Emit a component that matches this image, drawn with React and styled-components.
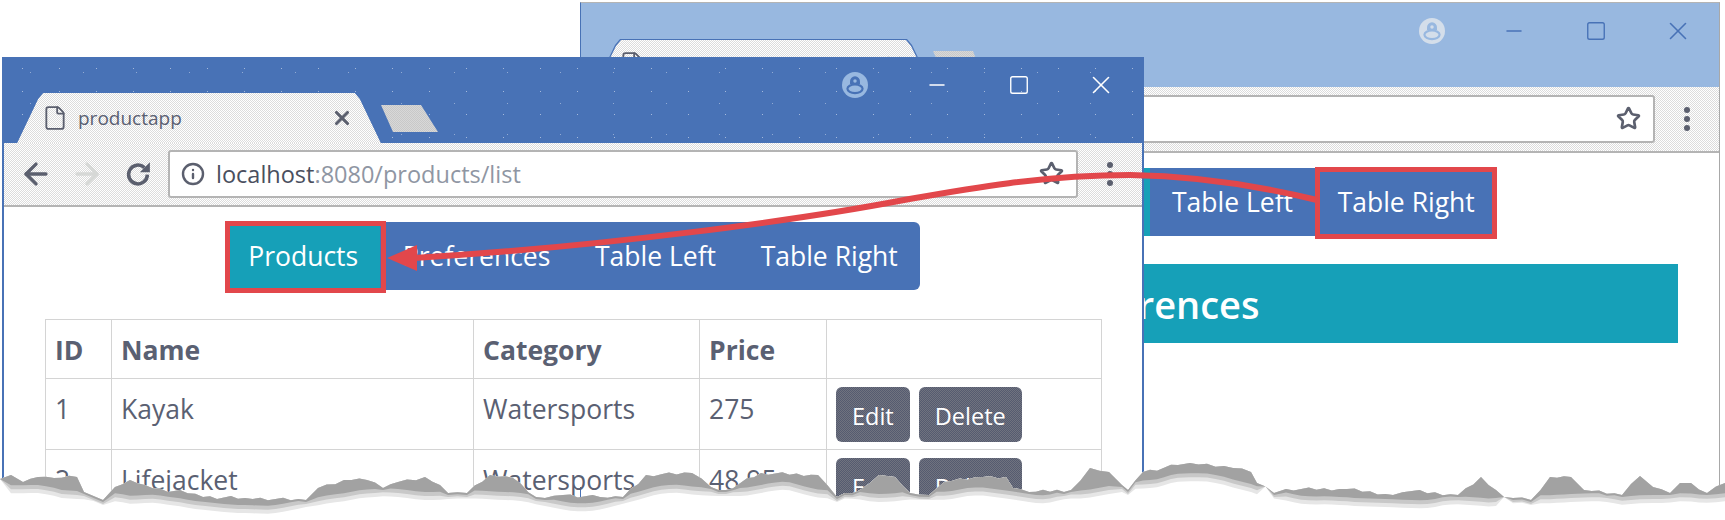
import React from 'react'
import styled, { createGlobalStyle } from 'styled-components'
import { ArrowLeft, ArrowRight, File, Info, Minus, Square, Star, X } from 'lucide-react'

const BLUE = '#4872b6'
const PALE = '#98b8e0'
const TEAL = '#16a0b8'
const RED = '#e2474b'
const INK = '#5a6072'

const dither = (a, b) => `repeating-conic-gradient(${a} 0 25%, ${b} 0 50%) 0 0 / 2px 2px`

const navItems = ['Products', 'Preferences', 'Table Left', 'Table Right']

const products = [
    { id: 1, name: 'Kayak', category: 'Watersports', price: '275' },
    { id: 2, name: 'Lifejacket', category: 'Watersports', price: '48.95' },
]

// top of the torn paper edge, left to right
const tear = [
    [0, 479], [11, 475], [23, 482], [38, 477], [54, 478], [77, 477], [84, 492], [103, 500], [115, 487],
    [130, 480], [145, 485], [168, 492], [180, 490], [203, 497], [245, 498], [306, 500], [318, 488],
    [344, 480], [367, 480], [383, 488], [398, 482], [425, 477], [440, 485], [448, 493], [467, 493],
    [490, 475], [513, 478], [536, 497], [563, 495], [600, 497], [623, 497], [646, 475], [692, 473],
    [711, 487], [726, 490], [761, 473], [818, 475], [837, 497], [860, 490], [879, 475], [895, 477],
    [910, 493], [929, 495], [944, 482], [983, 477], [1006, 477], [1013, 488], [1029, 492], [1071, 490],
    [1090, 468], [1109, 472], [1122, 485], [1128, 490], [1143, 472], [1178, 465], [1190, 463], [1224, 466],
    [1251, 472], [1257, 483], [1274, 493], [1286, 489], [1347, 489], [1393, 495], [1412, 491], [1458, 495],
    [1481, 477], [1496, 490], [1504, 497], [1531, 500], [1550, 477], [1571, 477], [1584, 490], [1622, 495],
    [1640, 476], [1653, 487], [1670, 493], [1680, 483], [1691, 483], [1707, 493], [1725, 483],
]

// the paper has small breaks where no shadow shows
const inGap = (x) => x < 11 || (x > 1257 && x < 1272) || (x > 1498 && x < 1506)

const tearPoints = () => {
    const pts = []
    tear.forEach(([x, y], i) => {
        const next = tear[i + 1]
        pts.push({ x, y, base: y })
        if (!next) return
        const steps = Math.floor((next[0] - x) / 7)
        for (let s = 1; s < steps; s++) {
            const t = s / steps
            const jag = ((x + s * 13) % 5) - 2
            pts.push({ x: x + (next[0] - x) * t, y: y + (next[1] - y) * t + jag * 0.8, base: y + (next[1] - y) * t })
        }
    })
    return pts.map((p, i) => {
        const near = pts.slice(Math.max(0, i - 5), i + 6)
        return { ...p, soft: near.reduce((sum, n) => sum + n.base, 0) / near.length }
    })
}

const TornEdge = () => {
    const pts = tearPoints()
    const top = pts.map((p) => `${p.x},${p.y}`).join(' ')
    const lower = (offset, min) =>
        [...pts].reverse().map((p) => `${p.x},${inGap(p.x) ? p.y : Math.max(p.soft + offset, p.y + min)}`).join(' ')
    return (
        <Overlay viewBox="0 0 1725 520">
            <polygon points={`${top} 1725,520 0,520`} fill="#fff" />
            <polygon points={`${top} ${lower(15, 5)}`} fill="#e6e6e6" />
            <polygon points={`${top} ${lower(11, 4)}`} fill="#c8c8c8" />
            <polygon points={`${top} ${lower(7, 2)}`} fill="#a2a2a2" />
        </Overlay>
    )
}

const ArrowOverlay = () => (
    <Overlay viewBox="0 0 1725 520">
        <path
            d="M1317 200 C1260 186 1200 176 1130 175 C1040 175 960 190 904 200 C800 220 600 247 414 258"
            fill="none"
            stroke={RED}
            strokeWidth="6"
        />
        <polygon points="387,258 417,245 417,271" fill={RED} />
    </Overlay>
)

const ProfileIcon = ({ color, cut }) => (
    <svg width="26" height="26" viewBox="0 0 24 24">
        <circle cx="12" cy="12" r="12" fill={color} />
        <path d="M12 4a4.6 4.6 0 0 1 4.6 5v2H7.4V9A4.6 4.6 0 0 1 12 4z" fill={cut} />
        <circle cx="12" cy="8.4" r="1.6" fill={color} />
        <ellipse cx="12" cy="15.5" rx="7" ry="4" fill={color} stroke={cut} strokeWidth="2" />
    </svg>
)

const ReloadIcon = () => (
    <svg width="30" height="30" viewBox="0 0 24 24">
        <path d="M19.5 12.5a7.5 7.5 0 1 1-2.4-5.6" fill="none" stroke="#5b5f6e" strokeWidth="2.8" />
        <polygon points="21.5,2.5 21.5,10.5 13.5,10.5" fill="#5b5f6e" />
    </svg>
)

const Browser = ({ faded, address, titleHeight, toolbarHeight, tabWidth, children }) => {
    const controlColor = faded ? BLUE : '#fff'
    return (
        <>
            <TitleBar $faded={faded} $height={titleHeight}>
                <Controls>
                    <Control>
                        <ProfileIcon color={faded ? '#d4deea' : PALE} cut={faded ? PALE : BLUE} />
                    </Control>
                    <Control><Minus size={24} color={controlColor} strokeWidth={1.5} /></Control>
                    <Control><Square size={22} color={controlColor} strokeWidth={1.5} /></Control>
                    <Control><X size={30} color={controlColor} strokeWidth={1.3} /></Control>
                </Controls>
                <TabRow>
                    <Tab $width={tabWidth} $outlined={faded}>
                        <File size={26} color="#5b5f6e" strokeWidth={1.7} />
                        <TabTitle>productapp</TabTitle>
                        <X size={22} color="#5b5f6e" strokeWidth={3.4} />
                    </Tab>
                    <NewTab $faded={faded} />
                </TabRow>
            </TitleBar>
            <Toolbar $height={toolbarHeight}>
                <NavIcon><ArrowLeft size={34} color="#5b5f6e" strokeWidth={2.4} /></NavIcon>
                <NavIcon><ArrowRight size={34} color="#d6d8d6" strokeWidth={2.4} /></NavIcon>
                <NavIcon><ReloadIcon /></NavIcon>
                <AddressBar>
                    <Info size={24} color="#5b5f6e" strokeWidth={2.4} />
                    <Url>{address && <><b>localhost</b>:8080/products/list</>}</Url>
                    <Star size={25} color="#5b5f6e" strokeWidth={2.6} />
                </AddressBar>
                <Dots><i /><i /><i /></Dots>
            </Toolbar>
            {children}
        </>
    )
}

const PageNav = ({ active, highlight, reach = 0 }) => (
    <Nav>
        {navItems.map((item) => (
            <NavItem key={item} $active={item === active} $highlight={item === highlight} $reach={reach}>{item}</NavItem>
        ))}
    </Nav>
)

export default function App() {
    return (
        <Page>
            <GlobalStyle />
            <BackWindow>
                <Browser faded titleHeight={84} toolbarHeight={66} tabWidth={339}>
                    <Content>
                        <PageNav active="Preferences" highlight="Table Right" />
                        <Heading>Preferences</Heading>
                    </Content>
                </Browser>
            </BackWindow>
            <FrontWindow>
                <Browser address titleHeight={86} toolbarHeight={64} tabWidth={364}>
                    <Content>
                        <PageNav active="Products" highlight="Products" reach={6} />
                        <Table>
                            <colgroup>
                                <col width="66" />
                                <col width="362" />
                                <col width="226" />
                                <col width="127" />
                                <col width="275" />
                            </colgroup>
                            <thead>
                                <tr>
                                    <Th>ID</Th>
                                    <Th>Name</Th>
                                    <Th>Category</Th>
                                    <Th>Price</Th>
                                    <Th />
                                </tr>
                            </thead>
                            <tbody>
                                {products.map((p) => (
                                    <tr key={p.id}>
                                        <Td>{p.id}</Td>
                                        <Td>{p.name}</Td>
                                        <Td>{p.category}</Td>
                                        <Td>{p.price}</Td>
                                        <ActionCell>
                                            <Actions>
                                                <ActionButton>Edit</ActionButton>
                                                <ActionButton>Delete</ActionButton>
                                            </Actions>
                                        </ActionCell>
                                    </tr>
                                ))}
                            </tbody>
                        </Table>
                    </Content>
                </Browser>
            </FrontWindow>
            <ArrowOverlay />
            <TornEdge />
        </Page>
    )
}

const GlobalStyle = createGlobalStyle`
    html, body {
        margin: 0;
        background: #fff;
    }
    * {
        box-sizing: border-box;
    }
`
const Page = styled.div`
    position: relative;
    width: 1725px;
    height: 520px;
    overflow: hidden;
    background: #fff;
    font-family: "Open Sans", "Noto Sans", sans-serif;
    color: ${INK};
`
const Overlay = styled.svg`
    position: absolute;
    inset: 0;
    width: 1725px;
    height: 520px;
`
const BrowserWindow = styled.div`
    position: absolute;
    display: flex;
    flex-direction: column;
    background: #fff;
`
const BackWindow = styled(BrowserWindow)`
    left: 580px;
    top: 2px;
    width: 1140px;
    height: 500px;
    border-top: 1px solid #b4b4b4;
    border-left: 1px solid ${BLUE};
    border-right: 1px solid #a8a8a8;
`
const FrontWindow = styled(BrowserWindow)`
    left: 2px;
    top: 57px;
    width: 1142px;
    height: 430px;
    border-left: 2px solid ${BLUE};
    border-right: 2px solid ${BLUE};
`
const TitleBar = styled.div`
    height: ${(p) => p.$height}px;
    flex: none;
    display: flex;
    flex-direction: column;
    background-color: ${(p) => (p.$faded ? PALE : BLUE)};
    background-image: ${(p) => (p.$faded
        ? 'none'
        : 'radial-gradient(circle, rgba(255,255,255,.5) 0.7px, transparent 0.9px), radial-gradient(circle, rgba(255,255,255,.4) 0.7px, transparent 0.9px)')};
    background-size: 37px 23px, 53px 31px;
`
const Controls = styled.div`
    height: 36px;
    flex: none;
    padding-top: 13px;
    display: flex;
    justify-content: flex-end;
`
const Control = styled.div`
    width: 82px;
    height: 30px;
    display: flex;
    align-items: center;
    justify-content: center;
`
const TabRow = styled.div`
    flex: 1;
    display: flex;
    align-items: flex-end;
    padding-left: 13px;
`
const tabShape = 'polygon(0 100%, 21px 6px, 26px 0, calc(100% - 26px) 0, calc(100% - 21px) 6px, 100% 100%)'
const Tab = styled.div`
    position: relative;
    width: ${(p) => p.$width}px;
    height: 50px;
    padding: 0 28px 0 25px;
    display: flex;
    align-items: center;
    gap: 10px;
    clip-path: ${tabShape};
    background: ${(p) => (p.$outlined ? BLUE : 'transparent')};
    &::before {
        content: '';
        position: absolute;
        inset: ${(p) => (p.$outlined ? '1px 1px 0 1px' : '0')};
        clip-path: ${tabShape};
        background: ${dither('#fff', '#dcdcdc')};
    }
    & > * {
        position: relative;
    }
`
const TabTitle = styled.span`
    flex: 1;
    font-size: 19px;
`
const NewTab = styled.div`
    width: ${(p) => (p.$faded ? 50 : 57)}px;
    height: 27px;
    margin-bottom: 11px;
    background: ${dither('#d8d8d8', '#c8c8c8')};
    clip-path: polygon(0 0, 40px 0, 100% 100%, 12px 100%);
`
const Toolbar = styled.div`
    height: ${(p) => p.$height}px;
    flex: none;
    padding: 0 0 1px 6px;
    display: flex;
    align-items: center;
    background: ${dither('#fff', '#dcdcdc')};
    border-bottom: 2px solid #b4b4b4;
`
const NavIcon = styled.div`
    width: 51px;
    display: flex;
    justify-content: center;
`
const AddressBar = styled.div`
    flex: 1;
    height: 48px;
    margin-left: 5px;
    padding: 0 12px 0 11px;
    display: flex;
    align-items: center;
    gap: 11px;
    background: #fff;
    border: 2px solid #b4b4b4;
    border-radius: 3px;
`
const Url = styled.div`
    flex: 1;
    font-size: 23.5px;
    color: #8f96a3;
    b {
        font-weight: 500;
        color: #4a4f5e;
    }
`
const Dots = styled.div`
    width: 64px;
    flex: none;
    display: flex;
    flex-direction: column;
    align-items: center;
    gap: 3px;
    i {
        width: 6px;
        height: 6px;
        border-radius: 50%;
        background: #5b5f6e;
    }
`
const Content = styled.div`
    padding: 15px 41px 0;
    display: flex;
    flex-direction: column;
`
const Nav = styled.div`
    align-self: center;
    height: 68px;
    display: flex;
    background: ${BLUE};
    border-radius: 0 6px 6px 0;
`
const NavItem = styled.div`
    position: relative;
    padding: 0 22.3px;
    display: flex;
    align-items: center;
    font-size: 26.5px;
    color: #fff;
    background: ${(p) => (p.$active ? TEAL : 'transparent')};
    ${(p) => p.$highlight && `
        &::after {
            content: '';
            position: absolute;
            inset: -1px ${-p.$reach}px -3px ${p.$reach ? -1 : 0}px;
            border: 5px solid ${RED};
        }
    `}
`
const Heading = styled.h1`
    margin: 28px 0 0;
    height: 79px;
    display: flex;
    align-items: center;
    justify-content: center;
    background: ${TEAL};
    color: #fff;
    font-size: 38px;
    font-weight: 600;
`
const Table = styled.table`
    margin-top: 29px;
    width: 1056px;
    table-layout: fixed;
    border-collapse: collapse;
    font-size: 26.5px;
`
const Th = styled.th`
    height: 59px;
    padding: 2px 9px 0;
    text-align: left;
    font-weight: 700;
    border: 1px solid #d4d4d4;
`
const Td = styled.td`
    height: 71px;
    padding: 12px 9px 0;
    vertical-align: top;
    border: 1px solid #d4d4d4;
`
const ActionCell = styled(Td)`
    padding: 8px 9px 0;
`
const Actions = styled.div`
    display: flex;
    gap: 9px;
`
const ActionButton = styled.button`
    height: 55px;
    padding: 2px 16px 0;
    border: 0;
    border-radius: 6px;
    font-family: inherit;
    font-size: 23.5px;
    color: #fff;
    background: ${dither('#555b70', '#70737f')};
`
